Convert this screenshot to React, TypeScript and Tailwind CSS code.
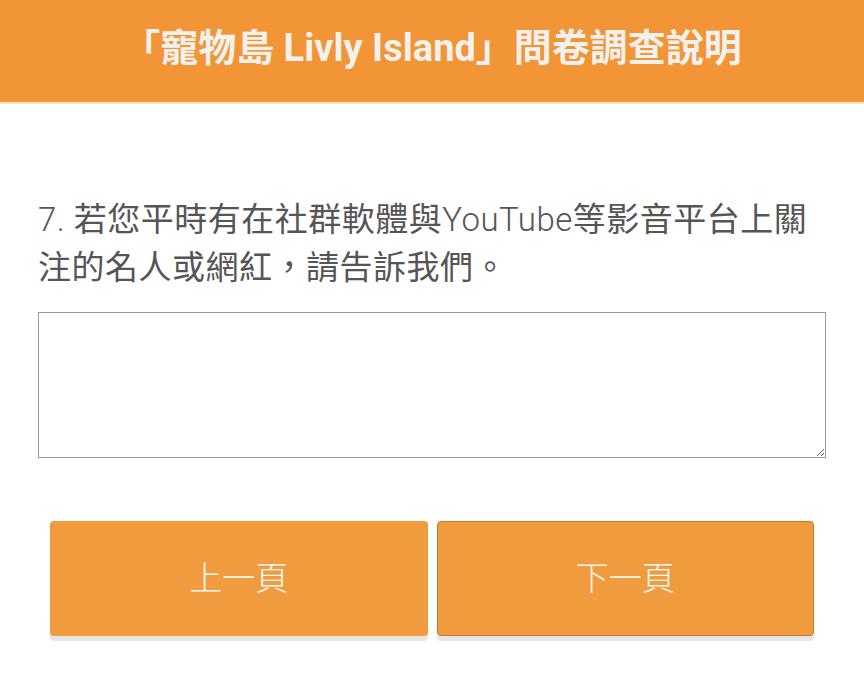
import React from "react";

export default function App() {
  const font = { fontFamily: 'Roboto, "Noto Sans CJK TC", sans-serif' };
  return (
    <div className="w-[864px] h-[686px] bg-white overflow-hidden" style={font}>
      <div className="h-[104px] bg-[#f19536] flex items-center justify-center border-b-2 border-[#fbe3c6]">
        <h1 className="text-[38px] font-bold text-[#f3f1ee] leading-none -mt-[7px]">
          「寵物島 Livly Island」問卷調查說明
        </h1>
      </div>
      <div className="px-[38px] pt-[92px]">
        <p className="text-[33px] leading-[48px] text-[#555555] font-light whitespace-nowrap tracking-[0.5px]">
          7. <span className="font-normal">若您平時有在社群軟體與</span>YouTube<span className="font-normal">等影音平台上關</span>
          <br />
          <span className="font-normal">注的名人或網紅，請告訴我們。</span>
        </p>
        <textarea className="mt-[20px] block w-[788px] h-[146px] border border-[#999999] resize-y outline-none" />
      </div>
      <div className="flex gap-[9px] px-[50px] pt-[63px]">
        <button className="w-[378px] h-[115px] rounded-[4px] bg-[#f09c3e] text-[#fbf7f2] text-[33px] font-light shadow-[0_5px_0_#e6e6e6]">
          上一頁
        </button>
        <button className="w-[378px] h-[115px] rounded-[4px] bg-[#f09c3e] border border-[#c47a2a] text-[#fbf7f2] text-[33px] font-light shadow-[0_5px_0_#e6e6e6]">
          下一頁
        </button>
      </div>
    </div>
  );
}
